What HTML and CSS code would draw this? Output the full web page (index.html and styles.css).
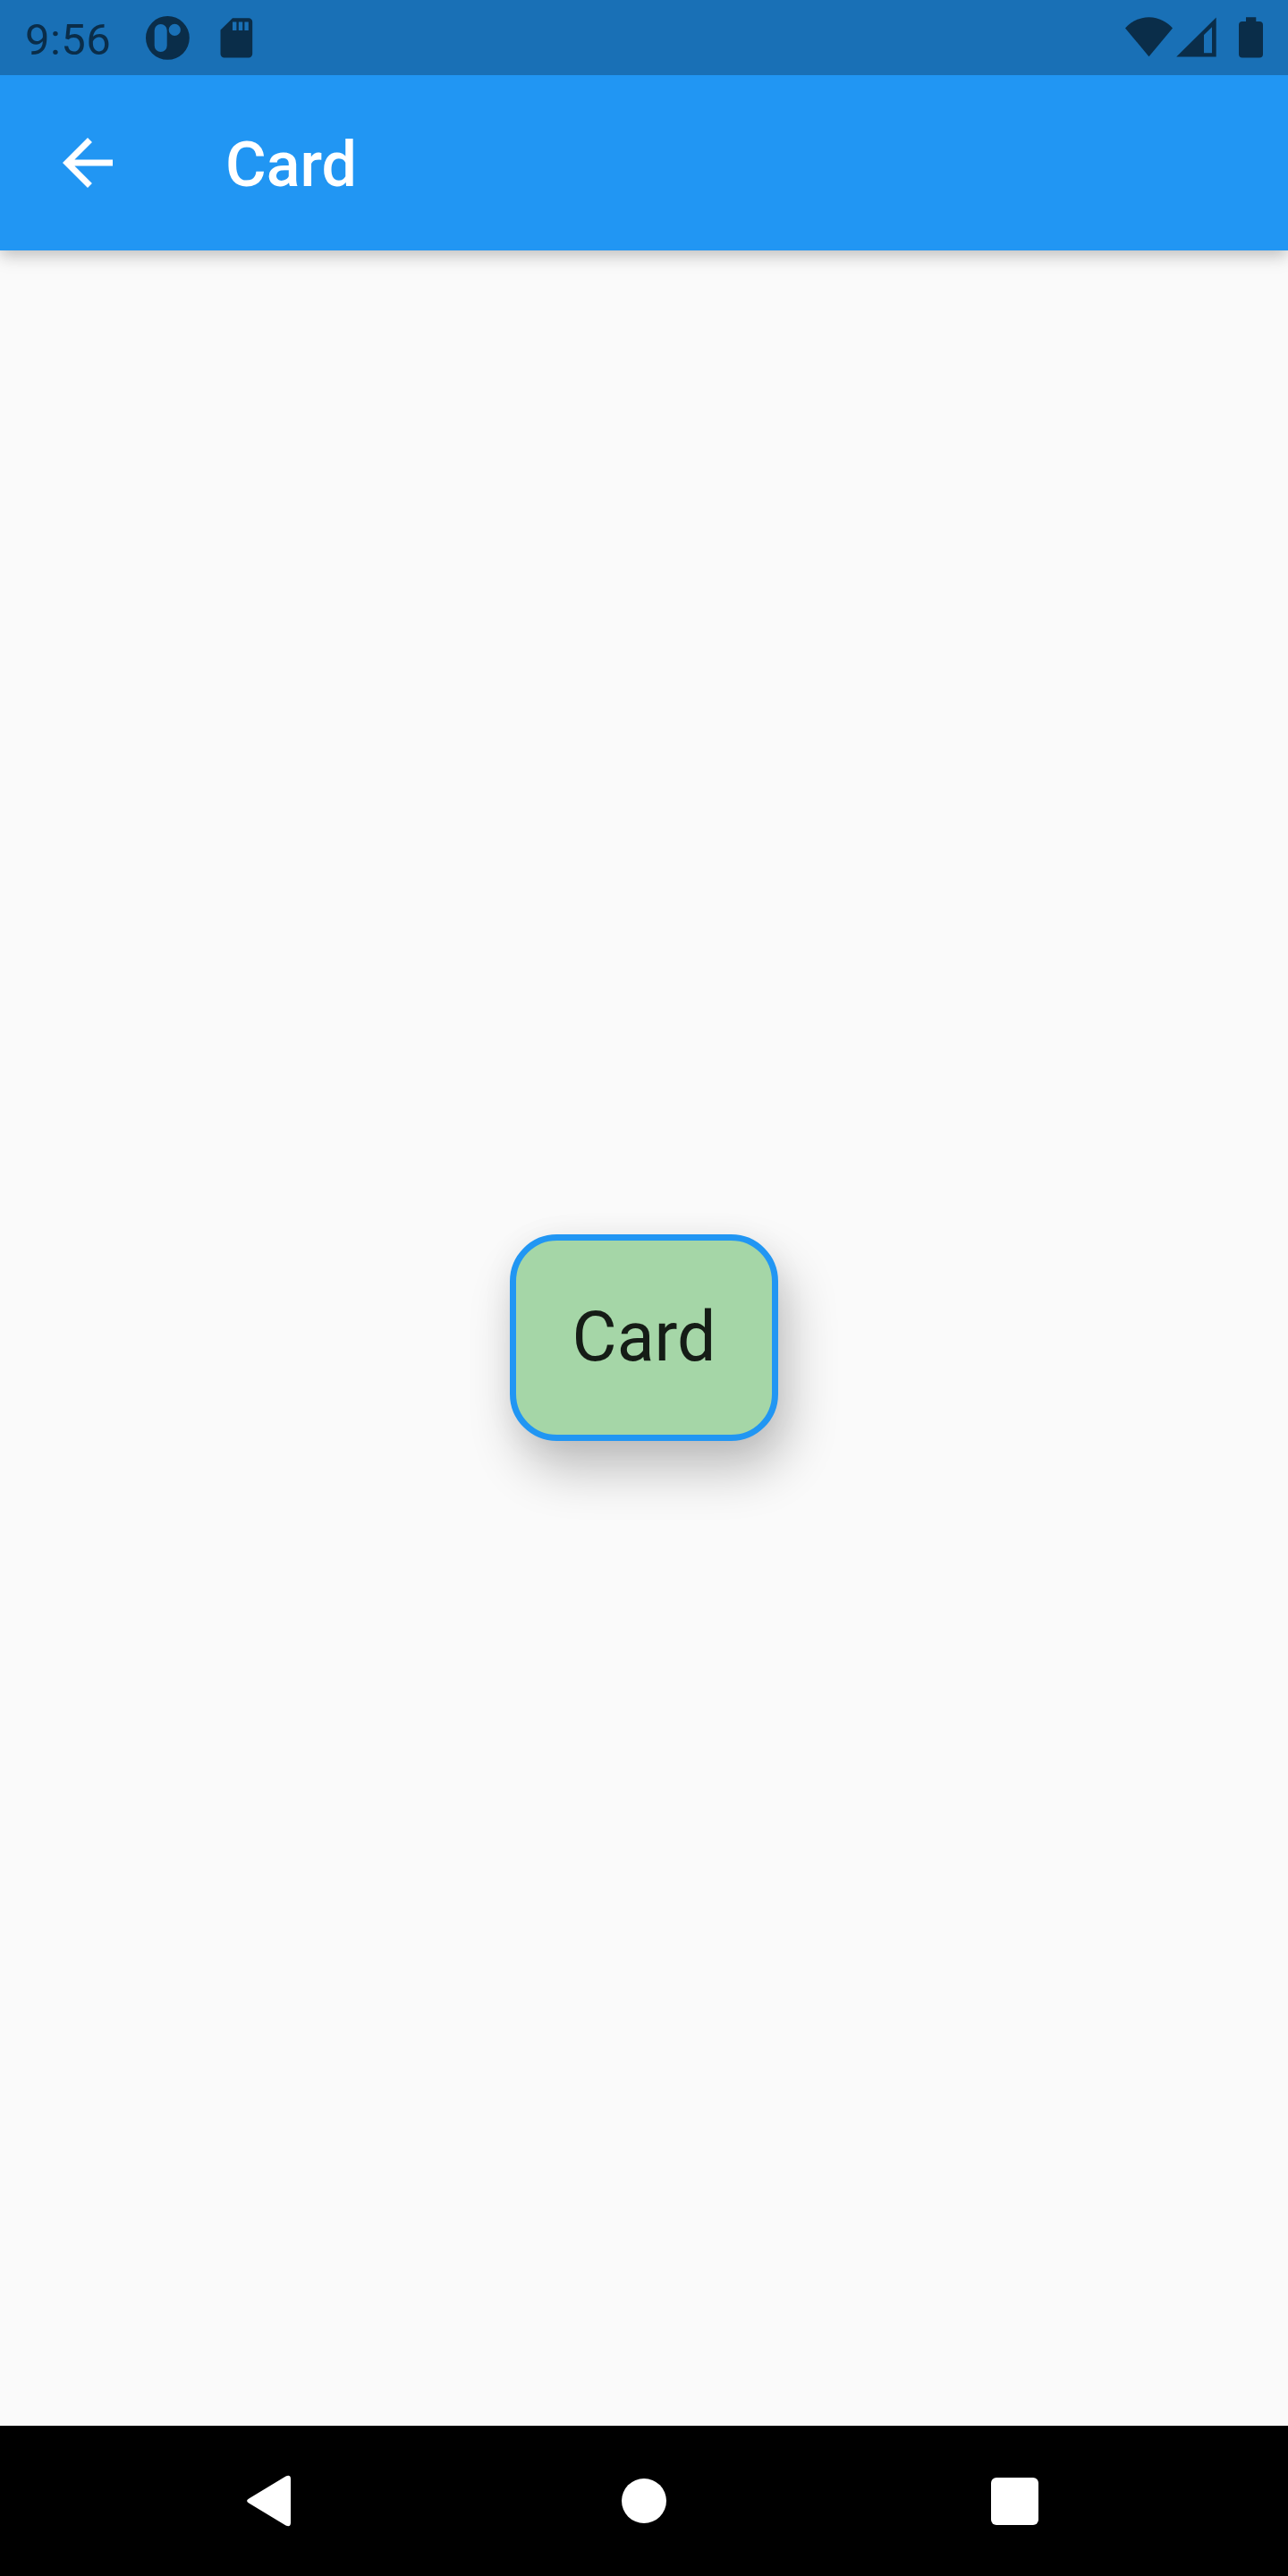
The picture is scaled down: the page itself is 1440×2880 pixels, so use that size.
FILE: index.html
```html
<!DOCTYPE html>
<html lang="en">
<head>
<meta charset="utf-8">
<title>Card</title>
<link rel="stylesheet" href="styles.css">
</head>
<body>
<div class="screen">
  <div class="status-bar">
    <span class="clock">9:56</span>
    <svg class="status-icons-left" width="140" height="84" viewBox="150 0 140 84" fill="currentColor" aria-hidden="true">
      <path fill-rule="evenodd" d="M187.4 18a24.4 24.4 0 1 0 0 48.8a24.4 24.4 0 1 0 0-48.8zM179.7 27a7 7 0 0 1 7 7v17a7 7 0 0 1-14 0v-17a7 7 0 0 1 7-7zM195.3 26.8a6.6 6.6 0 1 1 0 13.2a6.6 6.6 0 1 1 0-13.2z"/>
      <path fill-rule="evenodd" d="M260 20.2H278a4.2 4.2 0 0 1 4.2 4.2V60.2a4.2 4.2 0 0 1-4.2 4.2H250.7a4.2 4.2 0 0 1-4.2-4.2V33.6zM260 24.4v9.6h4.4v-9.6zM266.8 24.4v9.6h4.4v-9.6zM273.4 24.4v9.6h4.4v-9.6z"/>
    </svg>
    <svg class="status-icons-right" width="190" height="84" viewBox="1250 0 190 84" fill="currentColor" aria-hidden="true">
      <path d="M1284.5 63.2L1258 31.4C1264 25 1273 19.2 1284.5 19.2S1305 25 1311 31.4z"/>
      <path fill-rule="evenodd" d="M1315.2 63.5L1359.7 19.5V63.5zM1346 39V59.3H1355V30.3z"/>
      <path d="M1393 19.3h11.3v4.7h3.7a4 4 0 0 1 4 4v32.6a4 4 0 0 1-4 4h-19a4 4 0 0 1-4-4V28a4 4 0 0 1 4-4h4z"/>
    </svg>
  </div>
  <header class="app-bar">
    <svg class="back" width="84" height="84" viewBox="0 0 24 24" fill="#fff" aria-hidden="true">
      <path d="M20 11H7.83l5.59-5.59L12 4l-8 8 8 8 1.41-1.41L7.83 13H20v-2z"/>
    </svg>
    <h1 class="title">Card</h1>
  </header>
  <main class="content">
    <div class="card">Card</div>
  </main>
  <nav class="nav-bar">
    <svg width="50" height="58" viewBox="0 0 50 58" fill="#fff" aria-hidden="true">
      <path d="M2.2 26.6L43.5 1.5Q49 -.8 49 4.5V53.5Q49 58.8 43.5 56.5L2.2 31.4Q-2 29 2.2 26.6z"/>
    </svg>
    <span class="home"></span>
    <span class="recents"></span>
  </nav>
</div>
</body>
</html>
```
FILE: styles.css
```css
* {
  box-sizing: border-box;
}

body {
  margin: 0;
  background: #fafafa;
  font-family: Roboto, sans-serif;
}

.screen {
  display: flex;
  flex-direction: column;
  width: 1440px;
  height: 2880px;
}

.status-bar {
  display: flex;
  align-items: center;
  height: 84px;
  padding-left: 28px;
  background: #1970b6;
  color: #0a2d49;
}

.clock {
  width: 122px;
  padding-top: 5px;
  font-size: 49px;
  line-height: 58px;
  letter-spacing: 0.4px;
}

.status-icons-right {
  margin-left: auto;
}

.app-bar {
  display: flex;
  align-items: center;
  gap: 112px;
  height: 196px;
  padding-left: 56px;
  background: #2196f3;
  box-shadow: 0 8px 18px rgba(0, 0, 0, 0.15), 0 3px 14px rgba(0, 0, 0, 0.1);
  clip-path: inset(0 0 -40px);
}

.title {
  margin: 0;
  padding-top: 3px;
  color: #fff;
  font-size: 70px;
  font-weight: 500;
  line-height: 84px;
}

.content {
  display: flex;
  flex: 1;
  align-items: center;
  justify-content: center;
}

.card {
  margin-bottom: 1px;
  padding: 63px;
  border: 7px solid #2196f3;
  border-radius: 52.5px;
  background: #a5d6a7;
  box-shadow: 11px 32px 56px rgba(0, 0, 0, 0.24), 0 4px 36px rgba(0, 0, 0, 0.05);
  color: rgba(0, 0, 0, 0.87);
  font-size: 77px;
  line-height: 91px;
}

.nav-bar {
  display: flex;
  align-items: center;
  height: 168px;
  padding-left: 276px;
  background: #000;
}

.home {
  width: 50px;
  height: 50px;
  margin-left: 369px;
  border-radius: 50%;
  background: #fff;
}

.recents {
  width: 53px;
  height: 53px;
  margin-left: 363.4px;
  border-radius: 6px;
  background: #fff;
}
```
